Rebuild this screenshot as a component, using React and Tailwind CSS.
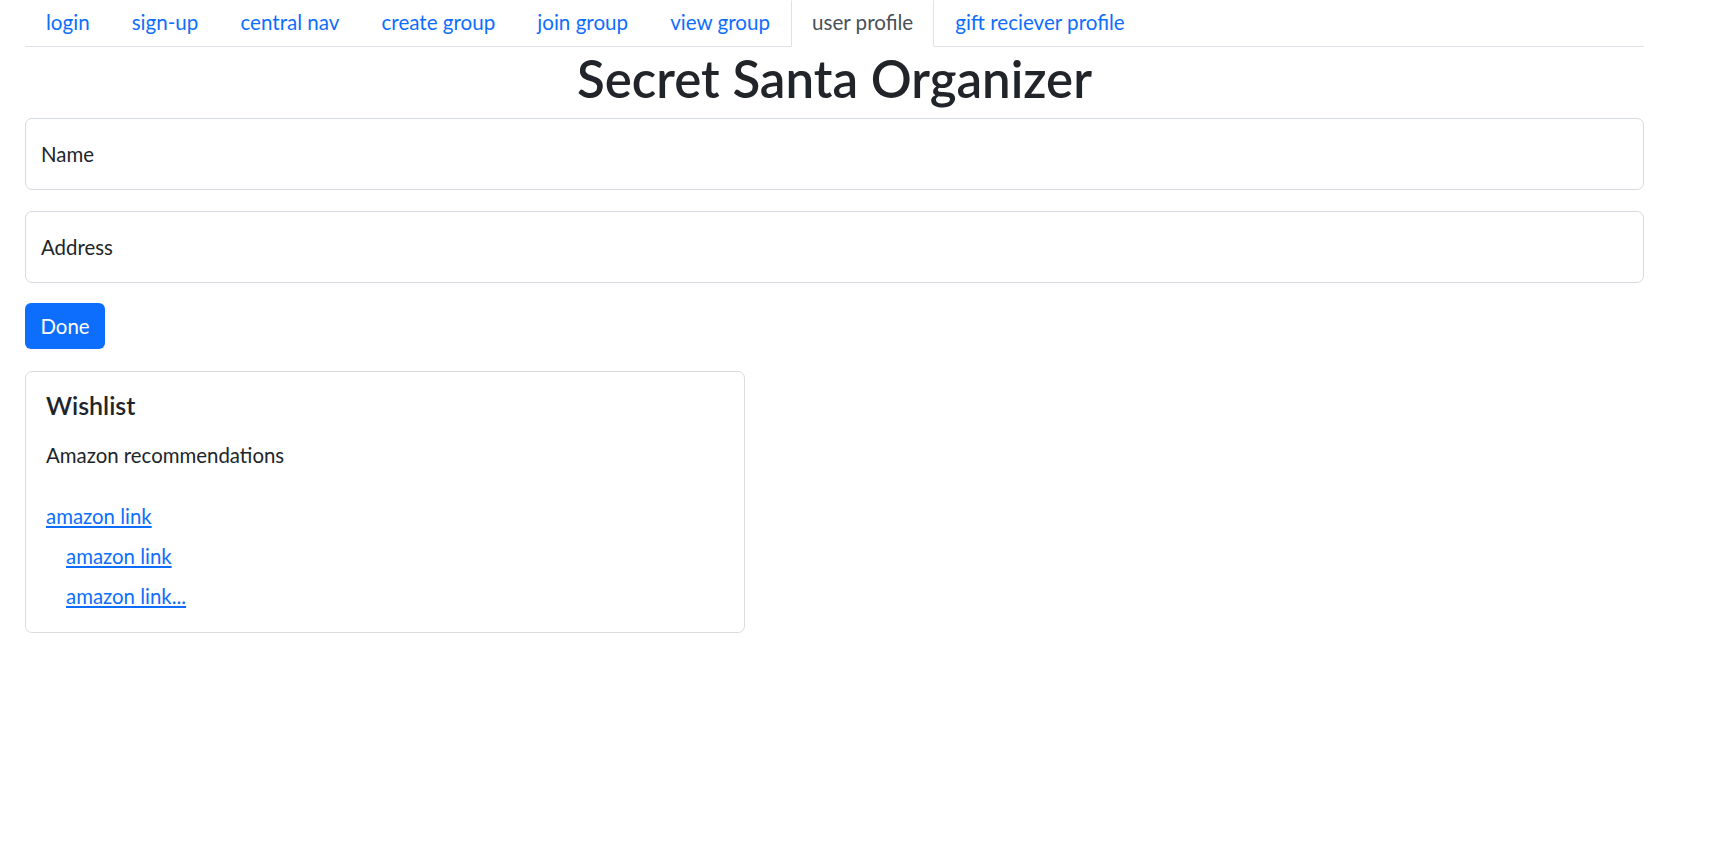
import React from 'react';

const tabs = [
  'login',
  'sign-up',
  'central nav',
  'create group',
  'join group',
  'view group',
  'user profile',
  'gift reciever profile',
];

function NavTabs({ active }) {
  return (
    <ul className="flex h-[47px] border-b border-[#dee2e6]">
      {tabs.map((tab) => (
        <li key={tab} className="-mb-px">
          <a
            href="#"
            className={`flex h-[47px] items-center border px-[20px] pb-[4px] text-[20.6px] leading-[30px] ${
              tab === active
                ? 'border-[#dee2e6] border-t-transparent border-b-white bg-white text-[#495057]'
                : 'border-transparent text-[#0d6efd]'
            }`}
          >
            {tab}
          </a>
        </li>
      ))}
    </ul>
  );
}

function FloatingField({ label }) {
  return (
    <div className="flex h-[72px] items-center rounded-[7px] border border-[#d5dae0] bg-white px-[15px]">
      <span className="text-[20.4px] leading-[30px] text-[#212529]">{label}</span>
    </div>
  );
}

function App() {
  return (
    <div className="min-h-screen bg-white font-['Lato',sans-serif] text-[#212529]">
      <div className="ml-[25px] w-[1619px]">
        <NavTabs active="user profile" />

        <h1 className="mt-[1px] mb-[8px] text-center text-[51px] font-semibold leading-[62px]">
          Secret Santa Organizer
        </h1>

        <form className="flex flex-col">
          <FloatingField label="Name" />
          <div className="mt-[21px]">
            <FloatingField label="Address" />
          </div>
          <div className="mt-[20px]">
            <button
              type="button"
              className="flex h-[46px] w-[80px] items-center justify-center rounded-[6px] bg-[#0d6efd] text-[20.4px] leading-[30px] text-white"
            >
              Done
            </button>
          </div>
        </form>

        <div className="mt-[22px] w-[720px] rounded-[7px] border border-[#dcdcdc] px-[20px] pt-[18px] pb-[21px]">
          <h5 className="text-[25px] font-semibold leading-[30px]">Wishlist</h5>
          <p className="mt-[20px] text-[20.4px] leading-[30px]">Amazon recommendations</p>
          <div className="mt-[31px] flex flex-col gap-[10px] text-[20.4px] leading-[30px]">
            <a href="#" className="self-start text-[#0d6efd] underline">
              amazon link
            </a>
            <a href="#" className="ml-[20px] self-start text-[#0d6efd] underline">
              amazon link
            </a>
            <a href="#" className="ml-[20px] self-start text-[#0d6efd] underline">
              amazon link...
            </a>
          </div>
        </div>
      </div>
    </div>
  );
}

export default App;
